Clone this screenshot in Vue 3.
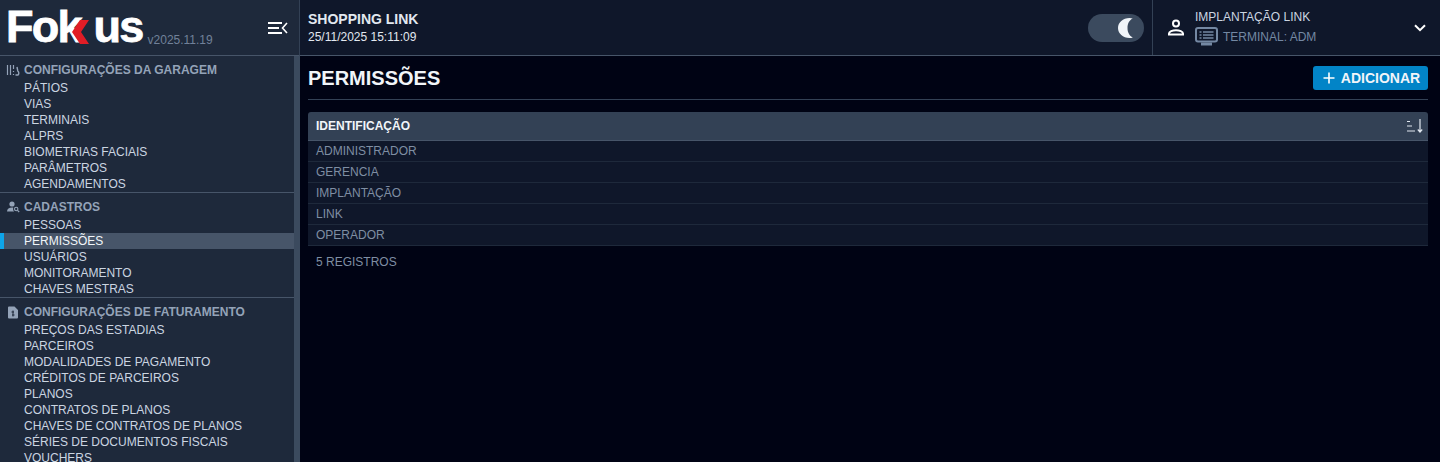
<script setup>
import { ref } from 'vue';

const sections = ref([
  {
    title: 'CONFIGURAÇÕES DA GARAGEM',
    icon: 'garage',
    items: ['PÁTIOS', 'VIAS', 'TERMINAIS', 'ALPRS', 'BIOMETRIAS FACIAIS', 'PARÂMETROS', 'AGENDAMENTOS'],
  },
  {
    title: 'CADASTROS',
    icon: 'people',
    items: ['PESSOAS', 'PERMISSÕES', 'USUÁRIOS', 'MONITORAMENTO', 'CHAVES MESTRAS'],
  },
  {
    title: 'CONFIGURAÇÕES DE FATURAMENTO',
    icon: 'invoice',
    items: [
      'PREÇOS DAS ESTADIAS',
      'PARCEIROS',
      'MODALIDADES DE PAGAMENTO',
      'CRÉDITOS DE PARCEIROS',
      'PLANOS',
      'CONTRATOS DE PLANOS',
      'CHAVES DE CONTRATOS DE PLANOS',
      'SÉRIES DE DOCUMENTOS FISCAIS',
      'VOUCHERS',
    ],
  },
]);

const permissions = ref(['ADMINISTRADOR', 'GERENCIA', 'IMPLANTAÇÃO', 'LINK', 'OPERADOR']);
</script>

<template>
  <div class="app">
    <aside class="sidebar">
      <div class="brand">
        <div class="logo">
          <span class="logo-word">Fok</span>
          <svg class="logo-chevron" width="20" height="24" viewBox="0 0 20 24">
            <path d="M10 0h9L11 12l8 12h-9L2 12z" fill="#e11d26" />
          </svg>
          <span class="logo-word">us</span>
        </div>
        <span class="version">v2025.11.19</span>
        <svg class="menu-toggle" width="20" height="14" viewBox="0 0 20 14" fill="none" stroke="#fff" stroke-width="2">
          <path d="M0 2h14M0 7h11M0 12h14" />
          <path d="M19 2l-4.500 5 4.500 5" stroke-width="1.600" />
        </svg>
      </div>
      <nav class="menu">
        <div v-for="section in sections" :key="section.title" class="section">
          <div class="section-title">
            <svg v-if="section.icon === 'garage'" class="section-icon" width="14" height="12" viewBox="0 0 14 12" fill="none" stroke="#94a3b8" stroke-width="1.200">
              <path d="M1.500 1v10M4.500 1v10M7.500 1v4M7.500 7v1M7.500 10v1" />
              <path d="M9.500 11h2.500c1.200-1.200 1-3-.2-4L11 3" stroke-width="1.400" />
            </svg>
            <svg v-else-if="section.icon === 'people'" class="section-icon" width="14" height="12" viewBox="0 0 14 12" fill="#94a3b8">
              <circle cx="6" cy="3" r="2.600" />
              <path d="M1 10.500c0-2.500 2.200-4 5-4 .6 0 1 .1 1.300.2-.5 1.200-.1 2.800.8 3.800z" />
              <circle cx="10.200" cy="8" r="1.700" fill="none" stroke="#94a3b8" stroke-width="1.100" />
              <path d="M11.500 9.300l1.700 1.700" stroke="#94a3b8" stroke-width="1.200" />
            </svg>
            <svg v-else class="section-icon" width="14" height="13" viewBox="0 0 14 13">
              <path d="M3 .5h5.500L12 4v7.500a1 1 0 0 1-1 1H3a1 1 0 0 1-1-1v-10a1 1 0 0 1 1-1z" fill="#94a3b8" />
              <path d="M7 4.500v6M5.500 6h2.500M6 9h2.500" stroke="#1e293b" stroke-width="1" fill="none" />
            </svg>
            <span>{{ section.title }}</span>
          </div>
          <a v-for="item in section.items" :key="item" class="item" :class="{ active: item === 'PERMISSÕES' }">{{ item }}</a>
        </div>
      </nav>
    </aside>

    <div class="body">
      <header class="topbar">
        <div class="place">
          <div class="place-name">SHOPPING LINK</div>
          <div class="place-date">25/11/2025 15:11:09</div>
        </div>
        <div class="theme-toggle">
          <svg width="16" height="20" viewBox="0 0 16 20">
            <path d="M11.500 0C5 0 0 4.500 0 10s5 10 11.500 10c1.200 0 2.300-.2 3.300-.6C11.500 18 9.500 14.500 9.500 10s2-8 5.300-9.400C13.800.2 12.700 0 11.500 0z" fill="#f1f5f9" />
          </svg>
        </div>
        <div class="user">
          <svg class="user-icon" width="18" height="17" viewBox="0 0 18 17" fill="none" stroke="#fff" stroke-width="2">
            <circle cx="9" cy="4.500" r="3" />
            <path d="M2 15.500v-1c0-2 3.500-3.300 7-3.300s7 1.300 7 3.300v1z" />
          </svg>
          <div class="user-info">
            <div class="user-name">IMPLANTAÇÃO LINK</div>
            <div class="user-terminal">
              <svg width="23" height="19" viewBox="0 0 23 19" fill="none" stroke="#7488a3" stroke-width="2">
                <rect x="1" y="1" width="21" height="13.500" rx="2" />
                <path d="M4.500 5h2M8 5h10.500M4.500 8h2M8 8h10.500M4.500 11h2M8 11h10.500" stroke-width="1.500" />
                <path d="M6 17h11" stroke-width="3" />
              </svg>
              <span>TERMINAL: ADM</span>
            </div>
          </div>
          <svg class="chevron" width="12" height="8" viewBox="0 0 12 8" fill="none" stroke="#fff" stroke-width="2">
            <path d="M1 1.200l5 5 5-5" />
          </svg>
        </div>
      </header>

      <main class="content">
        <div class="page-head">
          <h1>PERMISSÕES</h1>
          <button class="add-btn">
            <svg width="12" height="12" viewBox="0 0 12 12" stroke="#fff" stroke-width="1.600">
              <path d="M6 .5v11M.5 6h11" />
            </svg>
            ADICIONAR
          </button>
        </div>
        <div class="table">
          <div class="table-head">
            <span>IDENTIFICAÇÃO</span>
            <svg width="16" height="14" viewBox="0 0 16 14" fill="none" stroke="#e2e8f0" stroke-width="1.200">
              <path d="M0 2.500h3M0 7h5M0 12h8" />
              <path d="M13 0v13M10.800 10.500L13 13l2.200-2.500" />
            </svg>
          </div>
          <div v-for="name in permissions" :key="name" class="row">{{ name }}</div>
        </div>
        <div class="count">5 REGISTROS</div>
      </main>
    </div>
  </div>
</template>

<style scoped>
.app {
  display: flex;
  height: 462px;
  overflow: hidden;
  font-family: "Liberation Sans", Arial, sans-serif;
  font-size: 12px;
  background: #000314;
}

.sidebar {
  width: 300px;
  flex: none;
  display: flex;
  flex-direction: column;
  background: #1e293b;
}

.brand {
  height: 55px;
  flex: none;
  display: flex;
  align-items: flex-start;
  padding-left: 6px;
  border-bottom: 1px solid #475569;
  border-right: 1px solid #334155;
  position: relative;
}

.logo {
  display: flex;
  align-items: flex-end;
  height: 34px;
  margin-top: 10px;
}

.logo-word {
  font-weight: 700;
  font-size: 45px;
  line-height: 34px;
  color: #fff;
  letter-spacing: -1.8px;
  -webkit-text-stroke: 0.8px #fff;
}

.logo-chevron {
  flex: none;
  position: relative;
  margin: 0 4px 0 -11px;
}

.version {
  margin: 32px 0 0 5px;
  line-height: 16px;
  color: #718199;
}

.menu-toggle {
  position: absolute;
  left: 268px;
  top: 21px;
}

.menu {
  flex: 1;
  overflow: hidden;
  border-right: 6px solid #3b4a5e;
}

.section {
  padding-top: 4px;
  border-bottom: 1px solid #475569;
}

.section-title {
  height: 20px;
  display: flex;
  align-items: center;
  font-weight: 700;
  color: #94a3b8;
  position: relative;
  padding-left: 24px;
}

.section-icon {
  position: absolute;
  left: 6px;
  top: 4px;
}

.item {
  display: block;
  height: 16px;
  line-height: 16px;
  padding-left: 24px;
  color: #cbd5e1;
}

.item.active {
  padding-left: 20px;
  border-left: 4px solid #0ea5e9;
  background: #475569;
  color: #f1f5f9;
}

.body {
  flex: 1;
  min-width: 0;
  display: flex;
  flex-direction: column;
}

.topbar {
  height: 55px;
  flex: none;
  display: flex;
  align-items: center;
  background: #0f172a;
  border-bottom: 1px solid #475569;
}

.place {
  flex: 1;
  padding-left: 8px;
}

.place-name {
  font-size: 14px;
  font-weight: 700;
  line-height: 16px;
  color: #e2e8f0;
}

.place-date {
  margin-top: 3px;
  line-height: 14px;
  color: #e2e8f0;
}

.theme-toggle {
  width: 56px;
  height: 28px;
  display: flex;
  align-items: center;
  justify-content: flex-end;
  padding-right: 10px;
  box-sizing: border-box;
  border-radius: 14px;
  background: #3b4a5e;
}

.user {
  width: 288px;
  height: 100%;
  margin-left: 8px;
  display: flex;
  align-items: center;
  box-sizing: border-box;
  padding-left: 14px;
  border-left: 1px solid #334155;
}

.user-icon {
  flex: none;
}

.user-info {
  flex: 1;
  margin-left: 10px;
}

.user-name {
  line-height: 14px;
  color: #cbd5e1;
}

.user-terminal {
  margin-top: 3px;
  display: flex;
  align-items: center;
  gap: 5px;
  color: #7488a3;
}

.user-terminal span {
  padding-top: 1px;
}

.chevron {
  margin-right: 14px;
}

.content {
  flex: 1;
  padding: 0 12px 0 8px;
}

.page-head {
  height: 43px;
  display: flex;
  align-items: center;
  justify-content: space-between;
  border-bottom: 1px solid #334155;
}

h1 {
  margin: 1px 0 0;
  font-size: 20px;
  font-weight: 700;
  color: #f1f5f9;
}

.add-btn {
  width: 115px;
  height: 24px;
  display: flex;
  align-items: center;
  justify-content: center;
  gap: 6px;
  padding: 0 0 0 2px;
  border: 0;
  border-radius: 3px;
  background: #0284c7;
  color: #f1f5f9;
  font-family: inherit;
  font-size: 14px;
  font-weight: 700;
}

.table {
  margin-top: 12px;
}

.table-head {
  height: 28px;
  display: flex;
  align-items: center;
  justify-content: space-between;
  padding: 0 5px 0 8px;
  border-bottom: 1px solid #475569;
  border-radius: 3px 3px 0 0;
  background: #334155;
  font-weight: 700;
  color: #f1f5f9;
}

.row {
  height: 20px;
  line-height: 20px;
  padding-left: 8px;
  border-bottom: 1px solid #1e293b;
  background: #0f172a;
  color: #7f8ea3;
}

.count {
  margin-top: 9px;
  padding-left: 8px;
  line-height: 14px;
  color: #7f8ea3;
}
</style>
